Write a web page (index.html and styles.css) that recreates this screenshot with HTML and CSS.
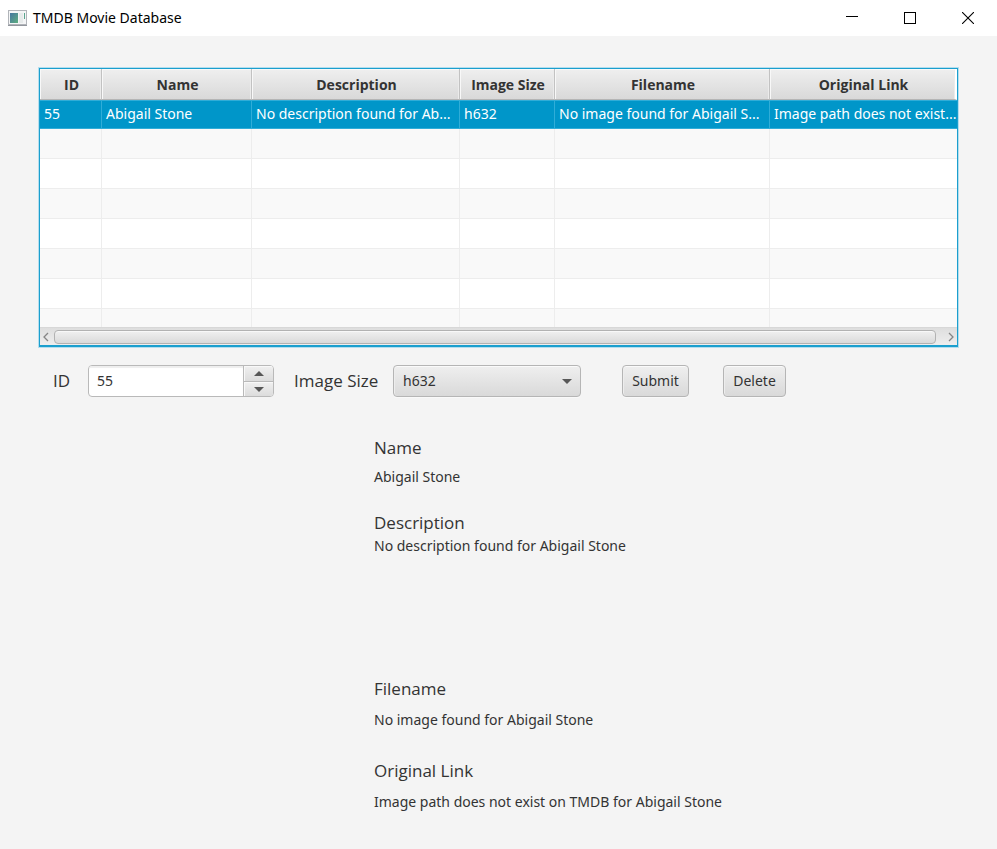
FILE: index.html
```html
<!DOCTYPE html>
<html lang="en">
<head>
<meta charset="utf-8">
<title>TMDB Movie Database</title>
<link rel="stylesheet" href="styles.css">
</head>
<body>
<header class="titlebar">
  <svg class="app-icon" width="19" height="16" viewBox="0 0 19 16" aria-hidden="true">
    <defs><linearGradient id="screen" x1="0" y1="0" x2="1" y2="1"><stop offset="0" stop-color="#44759f"/><stop offset="1" stop-color="#5fae80"/></linearGradient></defs>
    <rect x=".5" y=".5" width="18" height="14" fill="#f4f5f6" stroke="#b1b4b9"/>
    <path d="M0 15.5h19" stroke="#92969d"/>
    <rect x="2" y="3" width="8" height="10" fill="url(#screen)"/>
    <rect x="11" y="3" width="4" height="10" fill="#e6eaea"/>
    <path d="M16.5 3v6" stroke="#5aa58e"/>
  </svg>
  <h1 class="app-title">TMDB Movie Database</h1>
  <div class="window-buttons">
    <button type="button" aria-label="Minimize"><svg width="12" height="12" viewBox="0 0 12 12"><path d="M0 4.500h12" stroke="#000"/></svg></button>
    <button type="button" aria-label="Maximize"><svg width="12" height="12" viewBox="0 0 12 12"><rect x=".5" y=".5" width="11" height="11" fill="none" stroke="#000"/></svg></button>
    <button type="button" aria-label="Close"><svg width="12" height="12" viewBox="0 0 12 12"><path d="M0 0l12 12M12 0L0 12" stroke="#000" stroke-width="1.100"/></svg></button>
  </div>
</header>
<main>
  <section class="table-view">
    <table>
      <colgroup><col class="col-id"><col class="col-name"><col class="col-desc"><col class="col-size"><col class="col-file"><col></colgroup>
      <thead><tr><th>ID</th><th>Name</th><th>Description</th><th>Image Size</th><th>Filename</th><th>Original Link</th></tr></thead>
      <tbody>
        <tr class="selected"><td>55</td><td>Abigail Stone</td><td>No description found for Ab...</td><td>h632</td><td>No image found for Abigail S...</td><td>Image path does not exist...</td></tr>
        <tr><td></td><td></td><td></td><td></td><td></td><td></td></tr>
        <tr><td></td><td></td><td></td><td></td><td></td><td></td></tr>
        <tr><td></td><td></td><td></td><td></td><td></td><td></td></tr>
        <tr><td></td><td></td><td></td><td></td><td></td><td></td></tr>
        <tr><td></td><td></td><td></td><td></td><td></td><td></td></tr>
        <tr><td></td><td></td><td></td><td></td><td></td><td></td></tr>
        <tr class="partial"><td></td><td></td><td></td><td></td><td></td><td></td></tr>
      </tbody>
    </table>
    <div class="scrollbar">
      <svg width="12" height="10" viewBox="0 0 12 10"><path d="M8 1L4 5l4 4" fill="none" stroke="#858585" stroke-width="1.300"/></svg>
      <div class="thumb"></div>
      <svg width="12" height="10" viewBox="0 0 12 10"><path d="M4 1l4 4-4 4" fill="none" stroke="#858585" stroke-width="1.300"/></svg>
    </div>
  </section>
  <form class="controls">
    <label class="id-label" for="movie-id">ID</label>
    <div class="spinner">
      <input id="movie-id" type="text" inputmode="numeric" value="55">
      <div class="arrows">
        <button type="button" aria-label="Increase"><svg width="10" height="5" viewBox="0 0 10 5"><path d="M0 5l5-5 5 5z" fill="#575757"/></svg></button>
        <button type="button" aria-label="Decrease"><svg width="10" height="5" viewBox="0 0 10 5"><path d="M0 0l5 5 5-5z" fill="#575757"/></svg></button>
      </div>
    </div>
    <label class="size-label" for="image-size">Image Size</label>
    <div class="combo">
      <select id="image-size"><option>h632</option></select>
      <svg class="combo-arrow" width="10" height="5" viewBox="0 0 10 5"><path d="M0 0l5 5 5-5z" fill="#575757"/></svg>
    </div>
    <button class="push submit" type="button">Submit</button>
    <button class="push delete" type="button">Delete</button>
  </form>
  <dl class="details">
    <dt>Name</dt>
    <dd class="name">Abigail Stone</dd>
    <dt>Description</dt>
    <dd class="description">No description found for Abigail Stone</dd>
    <dt>Filename</dt>
    <dd class="filename">No image found for Abigail Stone</dd>
    <dt>Original Link</dt>
    <dd class="link">Image path does not exist on TMDB for Abigail Stone</dd>
  </dl>
</main>
</body>
</html>
```
FILE: styles.css
```css
* { box-sizing: border-box; }

body {
  margin: 0;
  min-height: 100vh;
  background: #f4f4f4;
  color: #333;
  font: 14px/20px "Segoe UI", "Noto Sans", "Open Sans", sans-serif;
}

button, input, select { font: inherit; color: inherit; }
svg { display: block; flex: none; }

.titlebar {
  display: flex;
  align-items: center;
  height: 36px;
  padding-left: 8px;
  background: #fff;
  color: #000;
}
.app-title { margin: 0 0 0 6px; font-size: 14px; font-weight: 400; }
.window-buttons { display: flex; margin-left: auto; }
.window-buttons button {
  display: grid;
  place-items: center;
  width: 58px;
  height: 34px;
  padding: 0;
  border: 0;
  background: none;
}

main { padding: 32px 39px 20px; }

.table-view {
  border: 1px solid #1b9fce;
  border-bottom-width: 2px;
  box-shadow: 0 0 0 1px #b4deee;
  background: #fff;
}
table { width: 100%; table-layout: fixed; border-collapse: separate; border-spacing: 0; }
.col-id { width: 62px; }
.col-name { width: 150px; }
.col-desc { width: 208px; }
.col-size { width: 95px; }
.col-file { width: 215px; }

th, .controls label, .details dt { font-family: "Segoe UI", "Open Sans", "Noto Sans", sans-serif; }

th {
  height: 31px;
  padding: 2px 0 0 2px;
  border-right: 1px solid #c2c2c2;
  border-bottom: 1px solid #b5b5b5;
  background: linear-gradient(#efefef, #d9d9d9);
  box-shadow: inset 1px 1px #f8f8f8, inset -1px 0 #ebebeb;
  font-weight: 700;
}
th:last-child { border-right: 2px solid #fff; }
td {
  height: 30px;
  padding: 0 0 2px 4px;
  overflow: hidden;
  border-right: 1px solid #ededed;
  border-bottom: 1px solid #ededed;
  white-space: nowrap;
}
td:last-child { border-right: 0; }
tbody tr:nth-child(even) { background: #f9f9f9; }
.partial { background: #f9f9f9; }
.selected { background: #0096c9; color: #fff; }
.selected td {
  height: 29px;
  padding-bottom: 0;
  border-color: #30add8;
  box-shadow: inset 0 1px #30add8;
}
.partial td { height: 18px; border-bottom: 0; }

.scrollbar {
  display: flex;
  align-items: center;
  gap: 2px;
  height: 18px;
  border-top: 1px solid #d8d8d8;
  background: linear-gradient(#dedede, #eee);
}
.scrollbar svg:last-child { margin-left: 7px; }
.thumb {
  flex: 1;
  height: 14px;
  border: 1px solid #b2b2b2;
  border-radius: 4px;
  background: linear-gradient(#f0f0f0, #dadada);
  box-shadow: inset 0 1px #f8f8f8;
}

.controls { display: flex; align-items: center; margin-top: 18px; padding-left: 14px; }
.controls label { font-size: 17px; line-height: 24px; }
.id-label { width: 35px; }
.size-label { width: 99px; margin-left: 20px; }

.spinner {
  display: flex;
  width: 186px;
  height: 32px;
  overflow: hidden;
  border: 1px solid #b9b9b9;
  border-radius: 4px;
  background: #fff;
}
.spinner input {
  flex: 1;
  min-width: 0;
  padding: 0 8px;
  border: 0;
  outline: 0;
  background: none;
  box-shadow: inset 0 2px 1px #eee;
}
.arrows { display: grid; grid-template-rows: 1fr 1fr; width: 30px; }
.arrows button {
  display: grid;
  place-items: center;
  padding: 0;
  border: 0;
  border-left: 1px solid #b9b9b9;
  background: linear-gradient(#f0f0f0, #dcdcdc);
  box-shadow: inset 1px 1px #f8f8f8;
}
.arrows button + button { border-top: 1px solid #b9b9b9; }

.combo { display: grid; align-items: center; width: 188px; }
.combo select, .combo-arrow { grid-area: 1 / 1; }
.combo-arrow { justify-self: end; margin-right: 9px; pointer-events: none; }
.combo select, .push {
  height: 32px;
  border: 1px solid #b5b5b5;
  border-radius: 4px;
  background: linear-gradient(#efefef, #d9d9d9);
  box-shadow: inset 0 1px #fafafa, inset 1px 0 #ededed, 0 1px #f9f9f9;
}
.combo select { width: 100%; padding: 0 9px; appearance: none; }
.push { padding: 0; }
.submit { width: 67px; margin-left: 41px; }
.delete { width: 63px; margin-left: 34px; }

.details { margin: 39px 0 0 335px; }
.details dt { font-size: 17px; line-height: 24px; }
.details dd { margin: 0; }
.details .name { padding: 7px 0 24px; }
.details .description { min-height: 142px; padding-top: 1px; }
.details .filename { padding: 9px 0 29px; }
.details .link { padding-top: 9px; }
```
